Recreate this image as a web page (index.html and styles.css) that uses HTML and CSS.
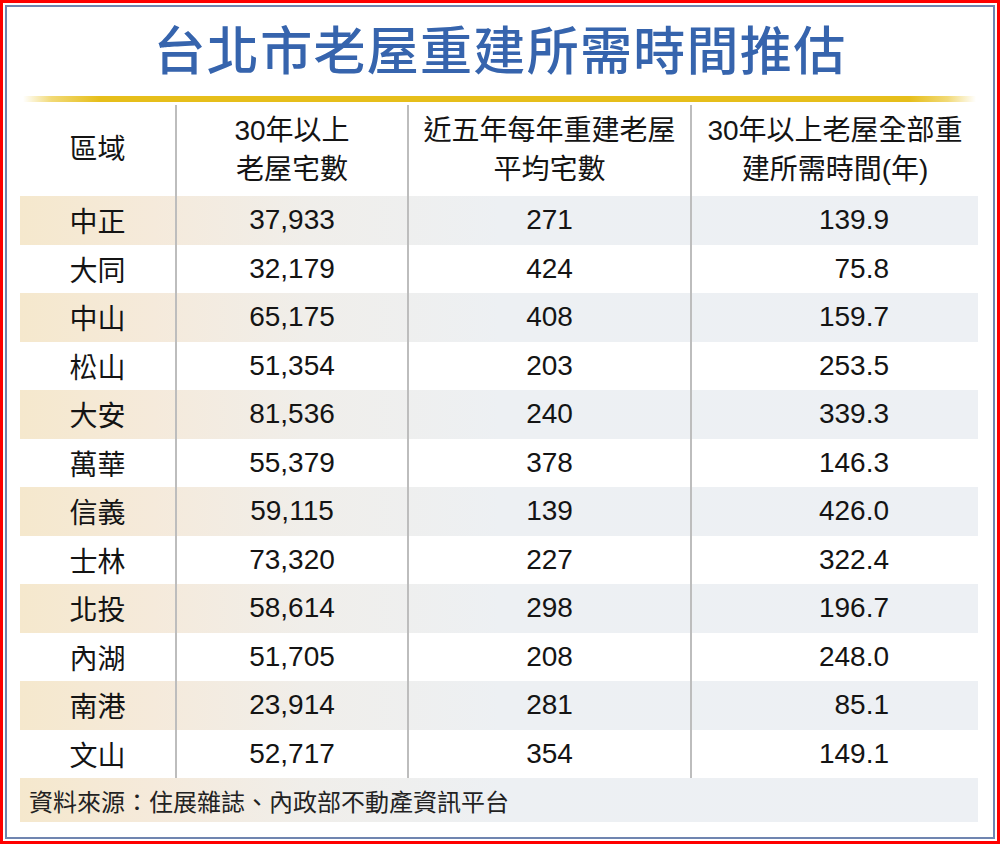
FILE: index.html
```html
<!DOCTYPE html>
<html lang="zh-Hant">
<head>
<meta charset="utf-8">
<title>台北市老屋重建所需時間推估</title>
<link rel="stylesheet" href="styles.css">
</head>
<body>
<div class="frame">
  <div class="panel">
    <h1 class="title">台北市老屋重建所需時間推估</h1>
    <div class="rule"></div>
    <div class="table">
      <div class="row head">
        <div class="cell">區域</div>
        <div class="cell">30年以上<br>老屋宅數</div>
        <div class="cell">近五年每年重建老屋<br>平均宅數</div>
        <div class="cell">30年以上老屋全部重<br>建所需時間(年)</div>
      </div>
      <div class="row shade"><div class="cell">中正</div><div class="cell">37,933</div><div class="cell">271</div><div class="cell num">139.9</div></div>
      <div class="row"><div class="cell">大同</div><div class="cell">32,179</div><div class="cell">424</div><div class="cell num">75.8</div></div>
      <div class="row shade"><div class="cell">中山</div><div class="cell">65,175</div><div class="cell">408</div><div class="cell num">159.7</div></div>
      <div class="row"><div class="cell">松山</div><div class="cell">51,354</div><div class="cell">203</div><div class="cell num">253.5</div></div>
      <div class="row shade"><div class="cell">大安</div><div class="cell">81,536</div><div class="cell">240</div><div class="cell num">339.3</div></div>
      <div class="row"><div class="cell">萬華</div><div class="cell">55,379</div><div class="cell">378</div><div class="cell num">146.3</div></div>
      <div class="row shade"><div class="cell">信義</div><div class="cell">59,115</div><div class="cell">139</div><div class="cell num">426.0</div></div>
      <div class="row"><div class="cell">士林</div><div class="cell">73,320</div><div class="cell">227</div><div class="cell num">322.4</div></div>
      <div class="row shade"><div class="cell">北投</div><div class="cell">58,614</div><div class="cell">298</div><div class="cell num">196.7</div></div>
      <div class="row"><div class="cell">內湖</div><div class="cell">51,705</div><div class="cell">208</div><div class="cell num">248.0</div></div>
      <div class="row shade"><div class="cell">南港</div><div class="cell">23,914</div><div class="cell">281</div><div class="cell num">85.1</div></div>
      <div class="row"><div class="cell">文山</div><div class="cell">52,717</div><div class="cell">354</div><div class="cell num">149.1</div></div>
      <div class="source">資料來源：住展雜誌、內政部不動產資訊平台</div>
    </div>
  </div>
</div>
</body>
</html>
```

FILE: styles.css
```css
html, body {
  margin: 0;
  padding: 0;
  background: #ffffff;
}

body {
  font-family: "Liberation Sans", "Noto Sans CJK TC", sans-serif;
  color: #141414;
}

.frame {
  width: 1000px;
  height: 844px;
  box-sizing: border-box;
  border: 3px solid #ff0000;
  padding: 2px;
}

.panel {
  height: 100%;
  box-sizing: border-box;
  border: 2px solid #7085b0;
  display: flex;
  flex-direction: column;
}

.title {
  margin: 0 0 8px 0;
  height: 81px;
  font-family: "Noto Sans CJK TC", sans-serif;
  font-weight: 500;
  font-size: 52px;
  line-height: 81px;
  text-align: center;
  color: #3664ad;
  letter-spacing: 1.3px;
}

.rule {
  margin: 0 17px 0 16px;
  height: 6px;
  flex: none;
  background: linear-gradient(to right,
    rgba(232, 192, 26, 0) 0%,
    rgba(232, 192, 26, 0.6) 3%,
    #e6be1a 8%,
    #e6be1a 93%,
    rgba(232, 192, 26, 0.6) 97%,
    rgba(232, 192, 26, 0) 100%);
}

.table {
  margin: 3px 15px 0 13px;
}

.row {
  display: grid;
  grid-template-columns: 155px 232px 283px 288px;
  height: 48.5px;
  font-size: 28px;
}

.row.head {
  height: 91px;
  line-height: 38.5px;
}

.cell {
  display: flex;
  align-items: center;
  justify-content: center;
  text-align: center;
}

.cell + .cell {
  border-left: 2px solid #bdbdbd;
}

.cell.num {
  justify-content: flex-end;
  padding-right: 89px;
}

.shade {
  background: linear-gradient(to right,
    #f5e8cd 0%,
    #f5eadb 14%,
    #f0eeea 30%,
    #edf0f3 50%,
    #edf0f4 100%);
}

.source {
  height: 44px;
  display: flex;
  align-items: center;
  padding-left: 9px;
  font-family: "Noto Sans CJK TC", sans-serif;
  font-size: 24px;
  color: #222222;
  background: linear-gradient(to right,
    #f5e8cd 0%,
    #f5eadb 14%,
    #f0eeea 30%,
    #edf0f3 50%,
    #edf0f4 100%);
}
```
